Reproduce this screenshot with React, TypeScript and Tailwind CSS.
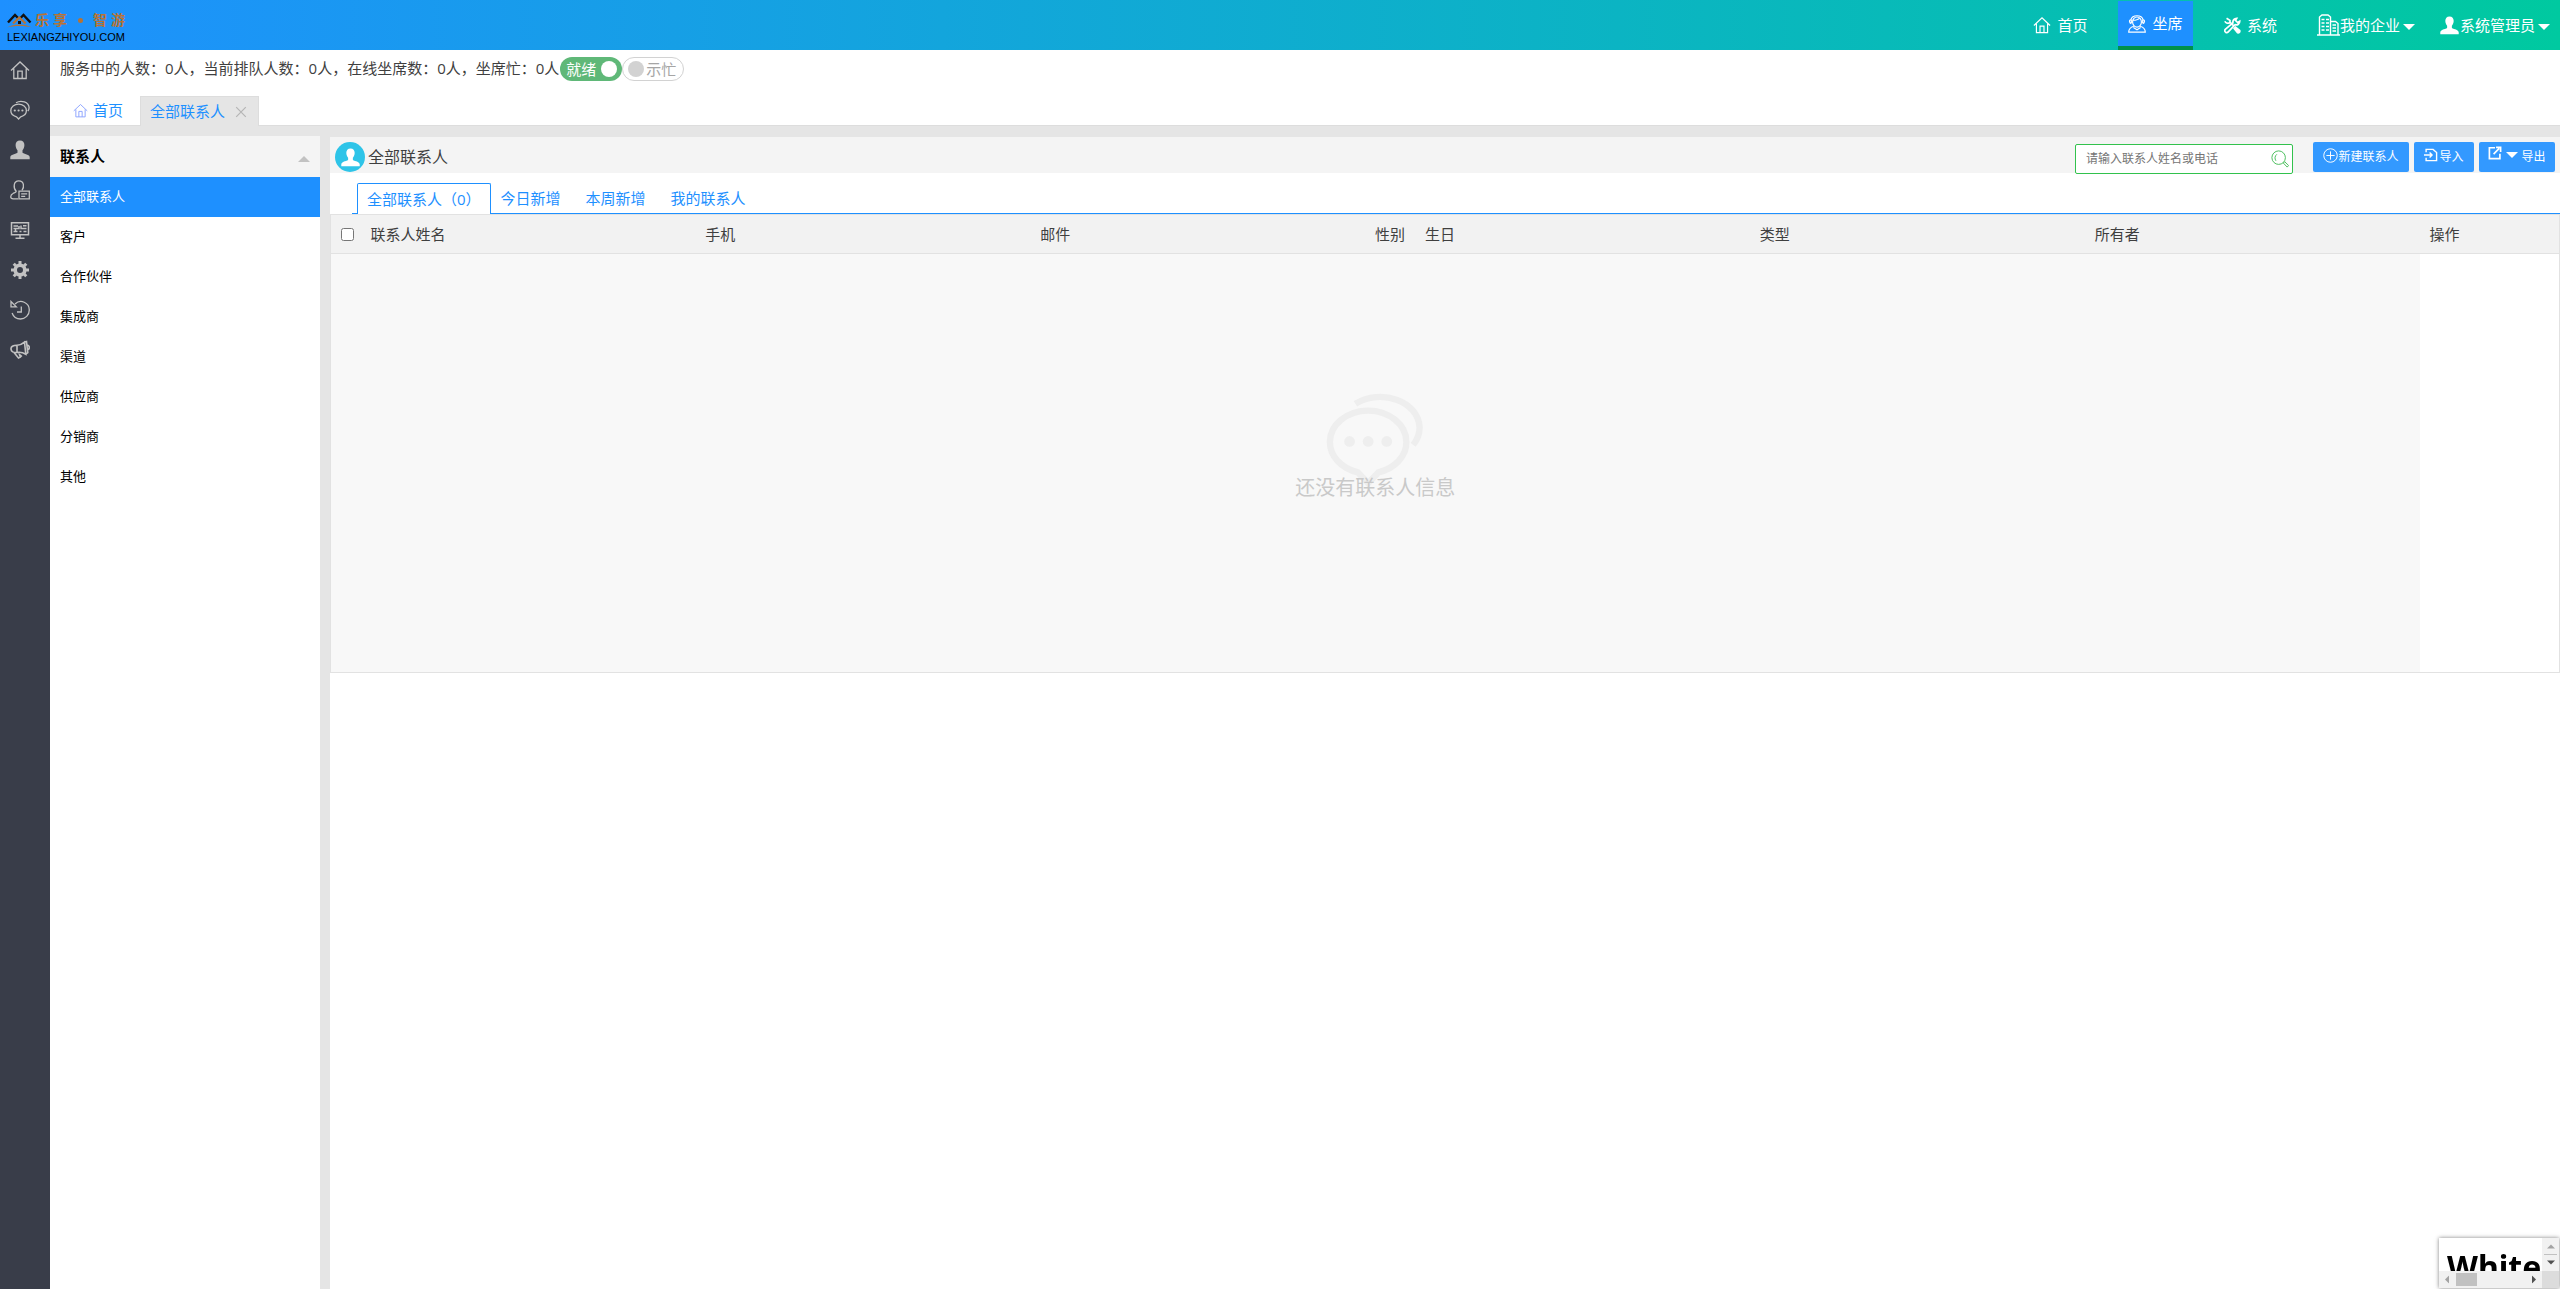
import type { ReactNode } from "react";

type IconProps = { className?: string };

function Svg({
  className,
  box = "0 0 20 20",
  width = 1.3,
  children,
}: IconProps & { box?: string; width?: number; children: ReactNode }) {
  return (
    <svg
      viewBox={box}
      className={`shrink-0 ${className ?? ""}`}
      fill="none"
      stroke="currentColor"
      strokeWidth={width}
      aria-hidden="true"
    >
      {children}
    </svg>
  );
}

const HomeIcon = ({ className }: IconProps) => (
  <Svg className={className}>
    <path d="M1 10.5 10 2l9 8.5M3.8 8.5v10h12.4v-10M7.8 18.5v-7.3h4.4v7.3" />
  </Svg>
);

const ChatIcon = ({ className }: IconProps) => (
  <Svg className={className}>
    <path d="M8.6 4.200c4.300 0 7.800 2.900 7.800 6.400 0 2.900-2.300 5.400-5.700 6.200l-2.100 2.200-2.100-2.200C3.100 16 .8 13.500.8 10.600c0-3.500 3.500-6.400 7.800-6.400Z" />
    <path d="M6 2.800C11.200-.4 18.800 2.200 19.100 7.600c0 1.500-.5 2.600-1.300 3.600" />
    <g fill="currentColor" stroke="none">
      <circle cx="4.800" cy="10.500" r="1.100" />
      <circle cx="8.600" cy="10.500" r="1.100" />
      <circle cx="12.400" cy="10.500" r="1.100" />
    </g>
  </Svg>
);

const UserIcon = ({ className }: IconProps) => (
  <Svg className={className}>
    <path
      fill="currentColor"
      stroke="none"
      d="M10 .5c2.900 0 4.400 2 4.400 4.600 0 2.200-.8 4-1.900 5.200v2.100c0 1.200 6.900 1.600 7.200 4.600v2.200H.3V17c.3-3 7.200-3.400 7.200-4.600v-2.100C6.400 9.100 5.600 7.300 5.600 5.100 5.600 2.500 7.100.5 10 .5Z"
    />
  </Svg>
);

const ContactIcon = ({ className }: IconProps) => (
  <Svg className={className}>
    <path d="M8.300 18.900H3.200C-.3 18.900.2 14.900 3 13.500c1.500-.8 3.200-1 3.200-2.200C3.300 8.300 3 .9 8.800.9c5.500 0 5.600 6.300 3.200 9.500" />
    <path d="M9 11.200h10.300v7.700H9ZM11.200 13.900h6M11.200 16.300h4" />
  </Svg>
);

const ScreenIcon = ({ className }: IconProps) => (
  <Svg className={className} width={1.5}>
    <path d="M1.500 2.700h17v12h-17ZM10 14.500V18M5.500 18.300h9M3.500 6H8M3.500 8.500H9V6M3.500 11.500h4M9.500 11.500h2M11 5.500v3h5.500M13 5.800h3.500M13.500 11.500h3M5.500 8.500v3" />
  </Svg>
);

const GearIcon = ({ className }: IconProps) => (
  <Svg className={className}>
    <circle cx="10" cy="10" r="4.800" strokeWidth="3.600" />
    <path
      strokeWidth="3"
      d="M10 1v3M10 16v3M1 10h3M16 10h3M3.700 3.700l2.100 2.100M14.200 14.200l2.100 2.100M3.700 16.300l2.100-2.100M14.200 5.800l2.100-2.100"
    />
  </Svg>
);

const HistoryIcon = ({ className }: IconProps) => (
  <Svg className={className}>
    <path d="M5 4C10.500-1.300 19.300 2.600 19.300 10c0 5-4 9-8.800 9-4 0-7.200-2.500-8.400-6M1 1.500v5.300h5.300ZM11.300 6.500V12H7" />
  </Svg>
);

const HornIcon = ({ className }: IconProps) => (
  <Svg className={className} width={1.6}>
    <path d="M7 5.200c3 0 5.500-1.200 7.500-3l1.300 12c-3-1.800-5.800-2.200-8.800-1.700M7 5.200c-4 .1-6.200 1.500-6 3.900.2 2.500 2.300 3.700 6 3.400M7 5.200v7.300M4 12.500l4.500 5.500 1.800-1-.8-2.500 2.500 2M14.500 2.200l2-.6 1.300 11-2 1.600M17 5c1.500.3 2.300 1.300 2.300 2.500s-.6 2.100-1.900 2.500" />
  </Svg>
);

const AgentIcon = ({ className }: IconProps) => (
  <Svg className={className}>
    <ellipse cx="10" cy="7.800" rx="4.900" ry="5.600" />
    <path d="M3.600 9.500C1.500 9.500.8 5.300 3.200 5.300 4.800-.6 15.200-.6 16.800 5.300c2.400 0 1.700 4.200-.4 4.200M3.700 5.300v4M16.300 5.300v4M5.300 5.700C8 6.300 12 4.500 13 3.500M6.500 12.500C3 13.500.8 15.500.8 19h18.400c0-3.500-2.200-5.500-5.700-6.500M6 13.800l4 2.600 4-2.600" />
  </Svg>
);

const ToolsIcon = ({ className }: IconProps) => (
  <Svg className={className} width={2}>
    <path d="M3 1.500 7 4v2l4.500 4.500M1 5c1 2.500 4 3 6 1.500M18.500 5c0 3-2.500 5-5.500 4L5 17.500a2.300 2.300 0 0 1-3.500-3L10.500 7C10 4 12 1.500 15 1.500L13.500 4 16 6.500Z" />
    <path fill="currentColor" d="m12 13.500 1.500-1.500 5 4c.5 1.500-1 3-2.500 2.500Z" />
  </Svg>
);

const BuildingIcon = ({ className }: IconProps) => (
  <Svg className={className} box="0 0 23 22" width={1.4}>
    <path d="M2.500 20.500V3L5 1h6l2.500 2v17.500M0 21h23M13.500 7.500h5l2.500 2v11M4.500 5.500h3M9 5.500h3M4.500 9h3M9 9h3M4.500 12.500h3M9 12.500h3M4.500 16h3M9 16h3M15.500 11h3.500M15.500 14h3.500M15.500 17h3.500" />
  </Svg>
);

const SearchIcon = ({ className }: IconProps) => (
  <Svg className={className} width={1.1}>
    <circle cx="8.500" cy="8.500" r="7.500" />
    <path d="M5.500 12C3.700 9.500 4.300 6.500 6.500 4.800M13.700 14.500l1.500-1.500 4.300 4.200-1.500 1.800Z" />
  </Svg>
);

const PlusIcon = ({ className }: IconProps) => (
  <Svg className={className}>
    <circle cx="10" cy="10" r="9" />
    <path d="M10 4.500v11M4.500 10h11" />
  </Svg>
);

const ImportIcon = ({ className }: IconProps) => (
  <Svg className={className} width={2}>
    <path d="M3 6V2h10l5 4.500V18H3v-4M0 10h11M8 6.500l3.500 3.500L8 13.500" />
  </Svg>
);

const ExportIcon = ({ className }: IconProps) => (
  <Svg className={className} width={2.4}>
    <path d="M10 2.500H2v15.500h15V11M8 11.500l8-8M11.500 2H18v6.500" />
  </Svg>
);

const CloseIcon = ({ className }: IconProps) => (
  <Svg className={className} width={2}>
    <path d="m2 2 16 16M18 2 2 18" />
  </Svg>
);

const Caret = ({ className }: IconProps) => (
  <svg viewBox="0 0 12 6" className={`shrink-0 ${className ?? ""}`} fill="currentColor" aria-hidden="true">
    <path d="M0 0h12L6 6Z" />
  </svg>
);

const railIcons = [
  { label: "首页", Icon: HomeIcon },
  { label: "会话", Icon: ChatIcon },
  { label: "用户", Icon: UserIcon },
  { label: "联系人", Icon: ContactIcon },
  { label: "监控", Icon: ScreenIcon },
  { label: "设置", Icon: GearIcon },
  { label: "历史", Icon: HistoryIcon },
  { label: "通知", Icon: HornIcon },
];

const categories = ["全部联系人", "客户", "合作伙伴", "集成商", "渠道", "供应商", "分销商", "其他"];
const filters = ["今日新增", "本周新增", "我的联系人"];

const columns = [
  { title: "联系人姓名", width: "" },
  { title: "手机", width: "" },
  { title: "邮件", width: "" },
  { title: "性别", width: "w-[50px]" },
  { title: "生日", width: "" },
  { title: "类型", width: "" },
  { title: "所有者", width: "" },
  { title: "操作", width: "w-[140px]" },
];

function Logo() {
  return (
    <a href="#" className="ml-[7px] mt-[10px] block self-start text-black">
      <span className="flex h-[20px] items-center">
        <svg viewBox="0 0 25 16" className="mr-[3px] h-[16px] w-[25px]" fill="none" aria-hidden="true">
          <path d="m1 10.500 7-7.500 3.500 3.500M13 6.500 16.500 3l7 7.500" stroke="#111" strokeWidth="2.400" />
          <path d="m6 11.500 6.300-6 6.300 6" stroke="#b87333" strokeWidth="2.200" />
          <path d="M0 15.500c7-4 18-4 25 0-7-2-18-2-25 0Z" fill="#b87333" />
          <path d="M11 9h3v3h-3z" fill="#111" />
        </svg>
        <span className="flex gap-[4px] text-[14px] font-bold leading-[20px] text-[#b87333]">
          <span>乐</span>
          <span>享</span>
          <span className="flex w-[18px] items-center justify-center">
            <span className="size-[5px] rounded-full bg-[#b87333]" />
          </span>
          <span>智</span>
          <span>游</span>
        </span>
      </span>
      <span className="block font-['Liberation_Sans',sans-serif] text-[11px] leading-[14px]">
        LEXIANGZHIYOU.COM
      </span>
    </a>
  );
}

function TopBar() {
  return (
    <header className="flex h-[50px] items-stretch justify-between bg-linear-to-r/srgb from-[#1e90ff] to-[#00c9a0] text-white">
      <Logo />
      <nav className="flex items-stretch gap-5 pr-[10px]">
        <a href="#" className="flex w-[75px] items-center justify-center gap-[6px]">
          <HomeIcon className="size-[18px]" />
          首页
        </a>
        <a
          href="#"
          className="mt-px flex w-[75px] items-center justify-center gap-[6px] border-b-4 border-[#009149] bg-[#1e90ff]"
        >
          <AgentIcon className="size-[18px]" />
          坐席
        </a>
        <a href="#" className="flex w-[75px] items-center justify-center gap-[6px]">
          <ToolsIcon className="size-[17px]" />
          系统
        </a>
        <button type="button" className="flex items-center pl-[9px]">
          <BuildingIcon className="h-[22px] w-[23px]" />
          我的企业
          <Caret className="ml-[3px] mt-1 h-[6px] w-[12px]" />
        </button>
        <button type="button" className="flex items-center pl-[5px]">
          <UserIcon className="mr-px size-[19px]" />
          系统管理员
          <Caret className="ml-[3px] mt-1 h-[6px] w-[12px]" />
        </button>
      </nav>
    </header>
  );
}

function StatusBar() {
  return (
    <div className="flex h-[46px] items-start pl-[10px] pt-[7px]">
      <p className="pr-px leading-[22px]">
        服务中的人数：0人，当前排队人数：0人，在线坐席数：0人，坐席忙：0人
      </p>
      <button
        type="button"
        role="switch"
        aria-checked="true"
        className="flex h-[24px] w-[62px] items-center justify-between rounded-full bg-[#5fb878] pl-[6px] pr-[5px] text-white"
      >
        就绪
        <span className="size-[16px] rounded-full bg-white" />
      </button>
      <button
        type="button"
        role="switch"
        aria-checked="false"
        className="flex h-[24px] w-[62px] items-center justify-between rounded-full border border-[#d2d2d2] pl-[5px] pr-[7px] text-[#a5a5a5]"
      >
        <span className="size-[16px] rounded-full bg-[#d2d2d2]" />
        示忙
      </button>
    </div>
  );
}

function PageTabs() {
  return (
    <div className="flex h-[30px] items-stretch border-b border-[#dddddd] pl-[10px] text-[#1e90ff]">
      <a href="#" className="flex w-[80px] items-center gap-[5px] pl-[13px]">
        <HomeIcon className="size-[15px] text-[#8fa6ff]" />
        首页
      </a>
      <div className="-mb-px flex items-center gap-[10px] border border-b-0 border-[#dddddd] bg-[#e5e5e5] pl-[9px] pr-[11px]">
        <a href="#">全部联系人</a>
        <button type="button" aria-label="关闭" className="text-[#b5b5b5]">
          <CloseIcon className="size-[12px]" />
        </button>
      </div>
    </div>
  );
}

function CategoryPanel() {
  return (
    <aside className="w-[270px] shrink-0 bg-white text-black">
      <h2 className="flex h-[41px] items-center justify-between bg-[#f4f4f4] px-[10px] font-bold">
        联系人
        <Caret className="mt-1 h-[6px] w-[12px] rotate-180 text-[#c2c2c2]" />
      </h2>
      <ul className="text-[13px]">
        {categories.map((name, i) => (
          <li key={name}>
            <a
              href="#"
              className={`flex h-[40px] items-center pl-[10px] ${i === 0 ? "bg-[#1e90ff] text-white" : ""}`}
            >
              {name}
            </a>
          </li>
        ))}
      </ul>
    </aside>
  );
}

function Toolbar() {
  return (
    <div className="flex h-[36px] items-start bg-[#f4f4f4] px-[5px]">
      <h1 className="flex h-[36px] flex-1 items-center gap-[3px] pt-[4px] text-[16px]">
        <span className="flex size-[30px] items-center justify-center rounded-full bg-[#2ec4e8] text-white">
          <UserIcon className="size-[19px]" />
        </span>
        全部联系人
      </h1>
      <label className="mr-5 mt-[7px] flex h-[30px] w-[218px] items-center rounded-[2px] border border-[#32c24d] bg-white pl-[10px] pr-[3px]">
        <input
          type="text"
          aria-label="搜索联系人"
          placeholder="请输入联系人姓名或电话"
          className="min-w-0 flex-1 text-[12px] outline-none placeholder:text-[#757575]"
        />
        <SearchIcon className="size-[18px] text-[#4fbf60]" />
      </label>
      <div className="mt-[5px] flex gap-[5px] text-[12px] text-white">
        <button type="button" className="flex h-[30px] w-[96px] items-center justify-center rounded-[2px] bg-[#3399ff]">
          <PlusIcon className="mb-1 size-[15px]" />
          新建联系人
        </button>
        <button type="button" className="flex h-[30px] w-[60px] items-center justify-center rounded-[2px] bg-[#3399ff]">
          <ImportIcon className="mb-1 mr-px size-[14px]" />
          导入
        </button>
        <button type="button" className="flex h-[30px] w-[76px] items-center justify-center rounded-[2px] bg-[#3399ff]">
          <ExportIcon className="mb-2 mr-px size-[14px]" />
          <Caret className="mx-[3px] mb-1 h-[6px] w-[12px]" />
          导出
        </button>
      </div>
    </div>
  );
}

function FilterTabs() {
  return (
    <div className="flex h-[41px] items-end pl-[22px] text-[#1e90ff]">
      <span className="w-[5px] border-b border-[#1e90ff]" />
      <a
        href="#"
        className="flex h-[31px] items-center rounded-t-[2px] border border-b-0 border-[#1e90ff] px-[9px]"
      >
        全部联系人（0）
      </a>
      <div className="flex h-[31px] flex-1 items-center gap-[25px] border-b border-[#1e90ff] pl-[10px]">
        {filters.map((name) => (
          <a href="#" key={name}>
            {name}
          </a>
        ))}
      </div>
    </div>
  );
}

function ContactTable() {
  return (
    <table className="w-full table-fixed border-collapse border border-[#e2e2e2]">
      <thead>
        <tr className="h-[39px] border-b border-[#e2e2e2] bg-[#f2f2f2]">
          <th className="w-[30px] pl-[10px] text-left">
            <input type="checkbox" aria-label="全选" className="block size-[13px]" />
          </th>
          {columns.map((col) => (
            <th key={col.title} className={`pl-[10px] text-left font-normal ${col.width}`}>
              {col.title}
            </th>
          ))}
        </tr>
      </thead>
      <tbody>
        <tr className="h-[419px]">
          <td colSpan={8} className="bg-[#f8f8f8] pb-[37px] text-center align-middle">
            <div className="flex flex-col items-center text-[20px] leading-[24px] text-[#c9c9c9]">
              <ChatIcon className="-mb-[12px] size-[98px] text-[#eeeeee]" />
              还没有联系人信息
            </div>
          </td>
          <td />
        </tr>
      </tbody>
    </table>
  );
}

// floating chat frame in the bottom corner
function ChatFrame() {
  return (
    <div className="fixed bottom-0 right-0 mb-px mr-px grid h-[50px] w-[120px] grid-cols-[1fr_17px] grid-rows-[1fr_17px] bg-white text-[#505050] shadow-[0_0_4px_rgba(0,0,0,0.5)]">
      <div className="overflow-hidden pl-[8px] pt-[9px] font-['Noto_Sans',sans-serif] text-[32px] font-bold leading-[40px] text-black">
        White
      </div>
      <div className="flex flex-col items-center justify-between bg-[#f1f1f1] py-[6px]">
        <Caret className="h-[5px] w-[8px] rotate-180 text-[#a3a3a3]" />
        <span className="h-px w-[13px] bg-[#c1c1c1]" />
        <Caret className="h-[5px] w-[8px]" />
      </div>
      <div className="flex items-center bg-[#f1f1f1] px-[4px]">
        <Caret className="h-[5px] w-[8px] rotate-90 text-[#a3a3a3]" />
        <span className="ml-[5px] h-[13px] w-[21px] bg-[#c1c1c1]" />
        <Caret className="ml-auto h-[5px] w-[8px] -rotate-90" />
      </div>
      <div className="bg-[#dcdcdc]" />
    </div>
  );
}

export default function App() {
  return (
    <div className="flex min-h-screen flex-col bg-white font-['Open_Sans','Noto_Sans_CJK_SC',sans-serif] text-[15px] text-[#3f3f3f]">
      <TopBar />
      <div className="flex flex-1">
        <nav className="w-[50px] shrink-0 bg-[#393d49] text-[#c2c2c2]">
          {railIcons.map(({ label, Icon }) => (
            <a key={label} href="#" aria-label={label} className="flex h-[40px] items-center pb-px pl-[10px]">
              <Icon className="size-[20px]" />
            </a>
          ))}
        </nav>
        <div className="flex min-w-0 flex-1 flex-col">
          <StatusBar />
          <PageTabs />
          <div className="flex flex-1 gap-[10px] bg-[#e5e5e5] pt-[10px]">
            <CategoryPanel />
            <main className="mt-px min-w-0 flex-1 bg-white">
              <Toolbar />
              <FilterTabs />
              <ContactTable />
            </main>
          </div>
        </div>
      </div>
      <ChatFrame />
    </div>
  );
}
